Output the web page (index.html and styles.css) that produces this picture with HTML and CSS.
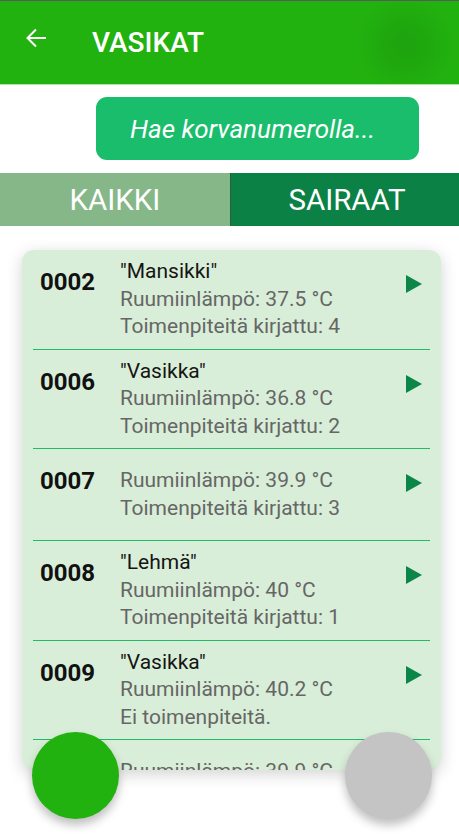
FILE: index.html
```html
<!DOCTYPE html>
<html lang="fi">
<head>
<meta charset="utf-8">
<title>Vasikat</title>
<link rel="stylesheet" href="styles.css">
</head>
<body>
<div class="screen">
  <header class="appbar">
    <svg class="back" width="22" height="20" viewBox="0 0 22 20" aria-hidden="true">
      <path d="M21 10H2.5M11 1.5L2.5 10L11 18.5" fill="none" stroke="#fff" stroke-width="2"/>
    </svg>
    <h1 class="title">VASIKAT</h1>
  </header>

  <div class="search-row">
    <div class="search">Hae korvanumerolla...</div>
  </div>

  <nav class="tabs">
    <div class="tab tab-all">KAIKKI</div>
    <div class="tab tab-sick">SAIRAAT</div>
  </nav>

  <section class="card">
    <div class="item">
      <div class="id">0002</div>
      <div class="info">
        <div class="name">"Mansikki"</div>
        <div class="line">Ruumiinlämpö: 37.5 °C</div>
        <div class="line">Toimenpiteitä kirjattu: 4</div>
      </div>
      <svg class="go" width="16" height="18" viewBox="0 0 16 18"><polygon points="0,0 16,9 0,18" fill="#0b8548"/></svg>
    </div>
    <div class="item">
      <div class="id">0006</div>
      <div class="info">
        <div class="name">"Vasikka"</div>
        <div class="line">Ruumiinlämpö: 36.8 °C</div>
        <div class="line">Toimenpiteitä kirjattu: 2</div>
      </div>
      <svg class="go" width="16" height="18" viewBox="0 0 16 18"><polygon points="0,0 16,9 0,18" fill="#0b8548"/></svg>
    </div>
    <div class="item">
      <div class="id">0007</div>
      <div class="info noname">
        <div class="line">Ruumiinlämpö: 39.9 °C</div>
        <div class="line">Toimenpiteitä kirjattu: 3</div>
      </div>
      <svg class="go" width="16" height="18" viewBox="0 0 16 18"><polygon points="0,0 16,9 0,18" fill="#0b8548"/></svg>
    </div>
    <div class="item">
      <div class="id">0008</div>
      <div class="info">
        <div class="name">"Lehmä"</div>
        <div class="line">Ruumiinlämpö: 40 °C</div>
        <div class="line">Toimenpiteitä kirjattu: 1</div>
      </div>
      <svg class="go" width="16" height="18" viewBox="0 0 16 18"><polygon points="0,0 16,9 0,18" fill="#0b8548"/></svg>
    </div>
    <div class="item">
      <div class="id">0009</div>
      <div class="info">
        <div class="name">"Vasikka"</div>
        <div class="line">Ruumiinlämpö: 40.2 °C</div>
        <div class="line">Ei toimenpiteitä.</div>
      </div>
      <svg class="go" width="16" height="18" viewBox="0 0 16 18"><polygon points="0,0 16,9 0,18" fill="#0b8548"/></svg>
    </div>
    <div class="item">
      <div class="id">0010</div>
      <div class="info noname">
        <div class="line">Ruumiinlämpö: 39.9 °C</div>
        <div class="line">Toimenpiteitä kirjattu: 2</div>
      </div>
      <svg class="go" width="16" height="18" viewBox="0 0 16 18"><polygon points="0,0 16,9 0,18" fill="#0b8548"/></svg>
    </div>
  </section>

  <div class="fab fab-green"></div>
  <div class="fab fab-gray"></div>
</div>
</body>
</html>
```

FILE: styles.css
```css
* { box-sizing: border-box; }
html, body { margin: 0; padding: 0; background: #fff; }
body { font-family: Roboto, "Noto Sans", "Liberation Sans", sans-serif; }

.screen {
  position: relative;
  width: 459px;
  height: 834px;
  overflow: hidden;
  background: #fff;
}

.appbar {
  display: flex;
  align-items: center;
  height: 85px;
  border-top: 1px solid #5a5a5a;
  border-bottom: 1px solid #a9eaa0;
  background-color: #22b20f;
  background-image: radial-gradient(circle at 405px 44px, #1ea30e 0, #1fa80e 22px, #22b20f 50px);
}
.back { margin-left: 25px; margin-top: -10px; flex: none; }
.title {
  margin: 0 0 0 45px;
  color: #fff;
  font-size: 28px;
  font-weight: 500;
  letter-spacing: 0;
  line-height: 1;
}

.search-row { padding: 12px 40px 0 96px; }
.search {
  height: 63px;
  border-radius: 11px;
  background: #19bd6b;
  color: #fff;
  font-style: italic;
  font-size: 26px;
  padding-right: 10px;
  display: flex;
  align-items: center;
  justify-content: center;
}

.tabs {
  display: flex;
  margin-top: 13px;
  height: 53px;
}
.tab {
  display: flex;
  align-items: center;
  justify-content: center;
  color: #fff;
  font-size: 29.5px;
}
.tab-all { width: 231px; background: #86b788; border-right: 1px solid #2e5e39; }
.tab-sick { flex: 1; background: #0b8146; padding-left: 4px; }

.card {
  margin: 24px 18px 0 22px;
  height: 520px;
  overflow: hidden;
  background: #d9eed8;
  border-radius: 12px;
  padding: 0 11px;
  box-shadow: 0 4px 16px rgba(0,0,0,0.18);
}

.item {
  display: flex;
  align-items: flex-start;
  padding: 8px 8px 8px 7px;
  border-bottom: 1.5px solid #1fbb68;
}
.id {
  width: 80px;
  flex: none;
  margin-top: 10px;
  font-size: 24px;
  font-weight: 700;
  line-height: 28px;
  color: #111;
}
.info {
  flex: 1;
  font-size: 21px;
  line-height: 27.5px;
}
.info.noname { padding: 10px 0; }
.name { color: #151515; }
.line { color: #666; }
.go { flex: none; margin-top: 17px; }

.fab {
  position: absolute;
  width: 87px;
  height: 87px;
  border-radius: 50%;
  top: 732px;
  box-shadow: 0 6px 10px rgba(0,0,0,0.25);
}
.fab-green { left: 32px; background: #22b20f; }
.fab-gray { left: 345px; background: #c4c4c4; }
```
